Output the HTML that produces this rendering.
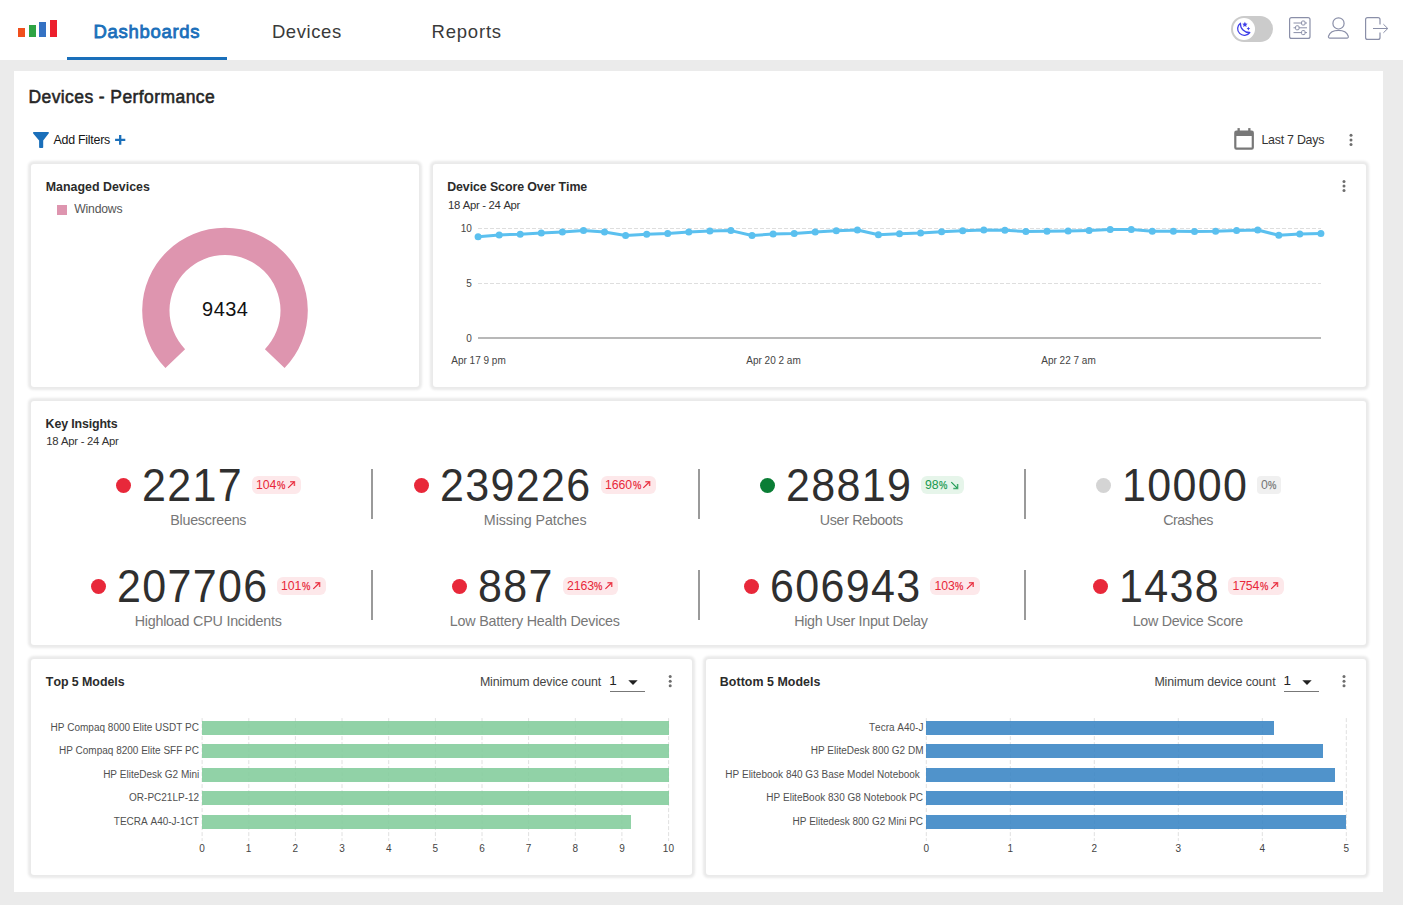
<!DOCTYPE html>
<html lang="en"><head><meta charset="utf-8"><title>Devices - Performance</title>
<style>
html,body{margin:0;padding:0}
body{width:1403px;height:905px;overflow:hidden;position:relative;background:#ebebeb;font-family:"Liberation Sans",sans-serif;color:#333}
.t{position:absolute;white-space:nowrap;line-height:1;font-kerning:none}
#hdr{position:absolute;left:0;top:0;width:1403px;height:60px;background:#fff}
#panel{position:absolute;left:14px;top:71px;width:1369px;height:821px;background:#fff}
.card{position:absolute;background:#fff;border-radius:3px;box-shadow:0 0 2.5px 2.5px rgba(0,0,0,.085)}
.lb{position:absolute;bottom:22.8px}
.bar{position:absolute;height:14px}
.bar.g{background:rgba(130,204,155,.88)} .bar.b{background:rgba(56,132,196,.88)}
.dot{position:absolute;width:15.3px;height:15.3px;border-radius:50%}
.badge{position:absolute;height:18px;border-radius:6px}
.vdiv{position:absolute;width:2px;height:49.6px;background:#9a9a9a}
#tab{position:absolute;left:67px;top:57px;width:160px;height:3px;background:#1a6fba}
#tog{position:absolute;left:1231px;top:16px;width:42px;height:26px;border-radius:13px;background:#cbcbcb}
#knob{position:absolute;left:1233px;top:18px;width:22px;height:22px;border-radius:50%;background:#fff}
.gfx{position:absolute;left:0;top:0}
.sel{position:absolute;height:1px;background:#777;top:691px;width:35px}
</style></head>
<body>
<div id="hdr">
  <div class="lb" style="left:18.1px;width:7px;height:9.6px;background:#f04f1c"></div>
  <div class="lb" style="left:28.95px;width:7px;height:12.2px;background:#2ea444"></div>
  <div class="lb" style="left:39.1px;width:6.9px;height:14.9px;background:#3572c3"></div>
  <div class="lb" style="left:49.8px;width:7px;height:17.5px;background:#ec1f2d"></div>
  <div id="tab"></div>
  <div id="tog"></div><div id="knob"></div>
</div>
<div id="panel"></div>
<div class="card" style="left:31px;top:164px;width:388px;height:223px"></div>
<div class="card" style="left:433px;top:164px;width:933px;height:223px"></div>
<div class="card" style="left:31px;top:401px;width:1335px;height:244px"></div>
<div class="card" style="left:31px;top:659px;width:661px;height:216px"></div>
<div class="card" style="left:706px;top:659px;width:660px;height:216px"></div>
<div style="position:absolute;left:56.8px;top:205px;width:10.4px;height:10px;background:#de95af"></div>
<div class="dot" style="left:115.8px;top:477.85px;background:#e8283a"></div>
<div class="dot" style="left:413.7px;top:477.85px;background:#e8283a"></div>
<div class="dot" style="left:759.7px;top:477.85px;background:#0a7d35"></div>
<div class="dot" style="left:1095.9px;top:477.85px;background:#d4d4d4"></div>
<div class="dot" style="left:90.8px;top:578.85px;background:#e8283a"></div>
<div class="dot" style="left:451.7px;top:578.85px;background:#e8283a"></div>
<div class="dot" style="left:743.9px;top:578.85px;background:#e8283a"></div>
<div class="dot" style="left:1092.7px;top:578.85px;background:#e8283a"></div>
<div class="badge" style="left:252.0px;top:476px;width:48.9px;background:#fde8ea"></div>
<div class="badge" style="left:601.0px;top:476px;width:55.1px;background:#fde8ea"></div>
<div class="badge" style="left:920.8px;top:476px;width:43.3px;background:#e6f5ea"></div>
<div class="badge" style="left:1256.9px;top:476px;width:24.1px;background:#f0f0f0;border-radius:4px"></div>
<div class="badge" style="left:277.0px;top:577px;width:49.1px;background:#fde8ea"></div>
<div class="badge" style="left:562.9px;top:577px;width:55.3px;background:#fde8ea"></div>
<div class="badge" style="left:930.4px;top:577px;width:49.3px;background:#fde8ea"></div>
<div class="badge" style="left:1228.3px;top:577px;width:55.7px;background:#fde8ea"></div>
<div class="vdiv" style="left:371.4px;top:469.3px"></div>
<div class="vdiv" style="left:371.4px;top:570.3px"></div>
<div class="vdiv" style="left:697.6px;top:469.3px"></div>
<div class="vdiv" style="left:697.6px;top:570.3px"></div>
<div class="vdiv" style="left:1024px;top:469.3px"></div>
<div class="vdiv" style="left:1024px;top:570.3px"></div>

<svg class="gfx" width="1403" height="905" viewBox="0 0 1403 905">
  <!-- bar chart grids -->
  <g stroke="#e0e0e0" stroke-width="1" stroke-dasharray="4 2" fill="none"><line x1="202.1" y1="718.1" x2="202.1" y2="841" /><line x1="248.8" y1="718.1" x2="248.8" y2="841" /><line x1="295.4" y1="718.1" x2="295.4" y2="841" /><line x1="342.0" y1="718.1" x2="342.0" y2="841" /><line x1="388.7" y1="718.1" x2="388.7" y2="841" /><line x1="435.4" y1="718.1" x2="435.4" y2="841" /><line x1="482.0" y1="718.1" x2="482.0" y2="841" /><line x1="528.6" y1="718.1" x2="528.6" y2="841" /><line x1="575.3" y1="718.1" x2="575.3" y2="841" /><line x1="621.9" y1="718.1" x2="621.9" y2="841" /><line x1="668.6" y1="718.1" x2="668.6" y2="841" /><line x1="926.3" y1="718.1" x2="926.3" y2="841" /><line x1="1010.3" y1="718.1" x2="1010.3" y2="841" /><line x1="1094.3" y1="718.1" x2="1094.3" y2="841" /><line x1="1178.3" y1="718.1" x2="1178.3" y2="841" /><line x1="1262.3" y1="718.1" x2="1262.3" y2="841" /><line x1="1346.3" y1="718.1" x2="1346.3" y2="841" /></g>
</svg>
<div class="bar g" style="left:202.1px;top:720.6px;width:466.5px"></div>
<div class="bar g" style="left:202.1px;top:744.2px;width:466.5px"></div>
<div class="bar g" style="left:202.1px;top:767.8px;width:466.5px"></div>
<div class="bar g" style="left:202.1px;top:791.0px;width:466.5px"></div>
<div class="bar g" style="left:202.1px;top:814.5px;width:429.2px"></div>
<div class="bar b" style="left:926.3px;top:720.6px;width:347.8px"></div>
<div class="bar b" style="left:926.3px;top:744.2px;width:396.9px"></div>
<div class="bar b" style="left:926.3px;top:767.8px;width:408.9px"></div>
<div class="bar b" style="left:926.3px;top:791.0px;width:416.6px"></div>
<div class="bar b" style="left:926.3px;top:814.5px;width:420.0px"></div>

<div class="sel" style="left:610px"></div><div class="sel" style="left:1284px"></div>
<svg class="gfx" width="1403" height="905" viewBox="0 0 1403 905">
  <!-- header icons -->
  <g fill="none" stroke="#8a8fa8" stroke-width="1.2">
    <rect x="1289.6" y="17.6" width="20.4" height="20.8" rx="2"/>
    <path d="M1293.5,23H1307 M1293.5,27.8H1307 M1293.5,32.6H1307" stroke-width="1"/>
    <rect x="1301.6" y="21" width="3.4" height="4" rx="1" fill="#fff" stroke-width="1"/>
    <rect x="1295.6" y="25.8" width="3.4" height="4" rx="1" fill="#fff" stroke-width="1"/>
    <rect x="1301.6" y="30.6" width="3.4" height="4" rx="1" fill="#fff" stroke-width="1"/>
    <circle cx="1338.5" cy="23.4" r="5.6"/>
    <path d="M1329.8,38.1 H1347 a1.4,1.4 0 0 0 1.3,-1.9 C1347,32.5 1343,30.4 1338.4,30.4 C1333.8,30.4 1329.8,32.5 1328.5,36.2 a1.4,1.4 0 0 0 1.3,1.9 Z" stroke-linejoin="round"/>
    <path d="M1380,24.5V19.6a2,2 0 0 0 -2,-2H1367.6a2,2 0 0 0 -2,2V37.4a2,2 0 0 0 2,2H1378a2,2 0 0 0 2,-2V32.5"/>
    <path d="M1373,28.5H1387.6 M1383.4,24.2L1387.8,28.5L1383.4,32.8" stroke-width="1"/>
  </g>
  <!-- moon -->
  <path d="M1240.4,23.2 A6.7,6.7 0 1 0 1249.8,32.5 A8.9,8.9 0 0 1 1240.4,23.2 Z" fill="none" stroke="#3f3fe8" stroke-width="1.3" stroke-linejoin="round"/>
  <g fill="#3f3fe8" stroke="none">
    <path d="M1244.9,21.8 l.8,1.7 1.9,.25 -1.4,1.3 .35,1.85 -1.65,-.9 -1.65,.9 .35,-1.85 -1.4,-1.3 1.9,-.25z"/>
    <path d="M1248.4,26.8 l.6,1.2 1.2,.6 -1.2,.6 -.6,1.2 -.6,-1.2 -1.2,-.6 1.2,-.6z"/>
  </g>
  <!-- filter funnel -->
  <path d="M33,132.6 a.8,.8 0 0 1 .7,-.6 H48.2 a.8,.8 0 0 1 .6,1.3 L43.2,140.6 V147.2 a.8,.8 0 0 1 -.8,.8 H39.9 a.8,.8 0 0 1 -.8,-.8 V140.6 L33.2,133.4 Z" fill="#1a6fba"/>
  <path d="M115.1,139.9H125.3 M120.2,135.1V144.7" stroke="#1a6fba" stroke-width="2.3" fill="none"/>
  <!-- calendar -->
  <g fill="#787878">
    <path d="M1236.4,130.5 h15.3 a2.2,2.2 0 0 1 2.2,2.2 v14.8 a2.2,2.2 0 0 1 -2.2,2.2 h-15.3 a2.2,2.2 0 0 1 -2.2,-2.2 v-14.8 a2.2,2.2 0 0 1 2.2,-2.2 Z M1236.4,136 v11.5 h15.3 v-11.5 Z" fill-rule="evenodd"/>
    <rect x="1237.5" y="128.1" width="2.3" height="3"/><rect x="1248.2" y="128.1" width="2.3" height="3"/>
  </g>
  <g fill="#6e6e6e"><circle cx="1351" cy="135.3" r="1.5"/><circle cx="1351" cy="139.9" r="1.5"/><circle cx="1351" cy="144.5" r="1.5"/><circle cx="1344" cy="181.4" r="1.5"/><circle cx="1344" cy="186" r="1.5"/><circle cx="1344" cy="190.6" r="1.5"/><circle cx="670.2" cy="676.6" r="1.5"/><circle cx="670.2" cy="681.2" r="1.5"/><circle cx="670.2" cy="685.8000000000001" r="1.5"/><circle cx="1344" cy="676.6" r="1.5"/><circle cx="1344" cy="681.2" r="1.5"/><circle cx="1344" cy="685.8000000000001" r="1.5"/></g>
  <path d="M628.3,680.3h9.4l-4.7,4.6z M1302.3,680.3h9.4l-4.7,4.6z" fill="#222"/>
  <!-- donut -->
  <path d="M165.44,368.12 A82.8,82.8 0 1 1 284.56,368.12 L264.92,349.15 A55.5,55.5 0 1 0 185.08,349.15 Z" fill="#de95af"/>
  <!-- line chart -->
  <g stroke="#dedede" stroke-width="1" stroke-dasharray="4 2">
    <line x1="478" y1="228.5" x2="1321" y2="228.5"/><line x1="478" y1="283.5" x2="1321" y2="283.5"/>
  </g>
  <line x1="478" y1="338" x2="1321" y2="338" stroke="#b8b8b8" stroke-width="2"/>
  <polyline points="478.1,236.8 499.2,234.9 520.2,234.2 541.3,233.0 562.4,231.9 583.5,230.6 604.5,232.1 625.6,235.5 646.7,234.2 667.7,233.4 688.8,232.1 709.9,231.0 730.9,230.6 752.0,235.5 773.1,234.0 794.2,233.4 815.2,231.9 836.3,230.8 857.4,230.0 878.4,234.7 899.5,233.8 920.6,233.0 941.6,231.7 962.7,230.8 983.8,230.0 1004.9,230.2 1025.9,231.5 1047.0,231.2 1068.1,231.0 1089.1,230.5 1110.2,229.6 1131.3,229.6 1152.3,231.2 1173.4,231.2 1194.5,231.4 1215.6,231.2 1236.6,230.5 1257.7,230.0 1278.8,235.3 1299.8,233.9 1320.9,233.5" fill="none" stroke="#5bc0ef" stroke-width="3" stroke-linejoin="round"/>
  <g fill="#5bc0ef"><circle cx="478.1" cy="236.8" r="3.5"/><circle cx="499.2" cy="234.9" r="3.5"/><circle cx="520.2" cy="234.2" r="3.5"/><circle cx="541.3" cy="233.0" r="3.5"/><circle cx="562.4" cy="231.9" r="3.5"/><circle cx="583.5" cy="230.6" r="3.5"/><circle cx="604.5" cy="232.1" r="3.5"/><circle cx="625.6" cy="235.5" r="3.5"/><circle cx="646.7" cy="234.2" r="3.5"/><circle cx="667.7" cy="233.4" r="3.5"/><circle cx="688.8" cy="232.1" r="3.5"/><circle cx="709.9" cy="231.0" r="3.5"/><circle cx="730.9" cy="230.6" r="3.5"/><circle cx="752.0" cy="235.5" r="3.5"/><circle cx="773.1" cy="234.0" r="3.5"/><circle cx="794.2" cy="233.4" r="3.5"/><circle cx="815.2" cy="231.9" r="3.5"/><circle cx="836.3" cy="230.8" r="3.5"/><circle cx="857.4" cy="230.0" r="3.5"/><circle cx="878.4" cy="234.7" r="3.5"/><circle cx="899.5" cy="233.8" r="3.5"/><circle cx="920.6" cy="233.0" r="3.5"/><circle cx="941.6" cy="231.7" r="3.5"/><circle cx="962.7" cy="230.8" r="3.5"/><circle cx="983.8" cy="230.0" r="3.5"/><circle cx="1004.9" cy="230.2" r="3.5"/><circle cx="1025.9" cy="231.5" r="3.5"/><circle cx="1047.0" cy="231.2" r="3.5"/><circle cx="1068.1" cy="231.0" r="3.5"/><circle cx="1089.1" cy="230.5" r="3.5"/><circle cx="1110.2" cy="229.6" r="3.5"/><circle cx="1131.3" cy="229.6" r="3.5"/><circle cx="1152.3" cy="231.2" r="3.5"/><circle cx="1173.4" cy="231.2" r="3.5"/><circle cx="1194.5" cy="231.4" r="3.5"/><circle cx="1215.6" cy="231.2" r="3.5"/><circle cx="1236.6" cy="230.5" r="3.5"/><circle cx="1257.7" cy="230.0" r="3.5"/><circle cx="1278.8" cy="235.3" r="3.5"/><circle cx="1299.8" cy="233.9" r="3.5"/><circle cx="1320.9" cy="233.5" r="3.5"/></g>
  <g stroke="#e8283a" fill="none"><path d="M288.1,487.8 L294.1,482.0" stroke-width="1.15"/><path d="M290.1,481.7 H294.4 V486.0" stroke-width="1.5" opacity=".8"/></g><g stroke="#e8283a" fill="none"><path d="M643.3,487.8 L649.3,482.0" stroke-width="1.15"/><path d="M645.3,481.7 H649.6 V486.0" stroke-width="1.5" opacity=".8"/></g><g stroke="#1a9a50" fill="none"><path d="M951.3,482.2 L957.3,488.1" stroke-width="1.15"/><path d="M953.3,488.4 H957.6 V484.1" stroke-width="1.5" opacity=".8"/></g><g stroke="#e8283a" fill="none"><path d="M313.3,588.8 L319.3,583.0" stroke-width="1.15"/><path d="M315.3,582.7 H319.6 V587.0" stroke-width="1.5" opacity=".8"/></g><g stroke="#e8283a" fill="none"><path d="M605.4,588.8 L611.4,583.0" stroke-width="1.15"/><path d="M607.4,582.7 H611.7 V587.0" stroke-width="1.5" opacity=".8"/></g><g stroke="#e8283a" fill="none"><path d="M966.9,588.8 L972.9,583.0" stroke-width="1.15"/><path d="M968.9,582.7 H973.2 V587.0" stroke-width="1.5" opacity=".8"/></g><g stroke="#e8283a" fill="none"><path d="M1271.2,588.8 L1277.2,583.0" stroke-width="1.15"/><path d="M1273.2,582.7 H1277.5 V587.0" stroke-width="1.5" opacity=".8"/></g>
</svg>
<span class="t" style="left:93.48px;top:22.60px;font-size:18.5px;color:#1a6fba;letter-spacing:0.704px;-webkit-text-stroke:.8px #1a6fba;">Dashboards</span>
<span class="t" style="left:271.88px;top:22.70px;font-size:18.5px;color:#3a3a3a;letter-spacing:0.581px;">Devices</span>
<span class="t" style="left:431.58px;top:22.70px;font-size:18.5px;color:#3a3a3a;letter-spacing:0.785px;">Reports</span>
<span class="t" style="left:28.46px;top:88.50px;font-size:17.5px;color:#262626;letter-spacing:0.412px;-webkit-text-stroke:.55px #262626;">Devices - Performance</span>
<span class="t" style="left:53.58px;top:134.10px;font-size:12.4px;color:#151515;letter-spacing:-0.259px;">Add Filters</span>
<span class="t" style="left:1261.38px;top:134.30px;font-size:12.4px;letter-spacing:-0.241px;">Last 7 Days</span>
<span class="t" style="left:45.77px;top:180.90px;font-size:12.4px;font-weight:700;color:#2b2b2b;letter-spacing:0.005px;">Managed Devices</span>
<span class="t" style="left:74.25px;top:202.80px;font-size:12.2px;color:#555;letter-spacing:-0.199px;">Windows</span>
<span class="t" style="left:202.06px;top:299.10px;font-size:20px;color:#111;letter-spacing:0.477px;">9434</span>
<span class="t" style="left:447.17px;top:180.90px;font-size:12.4px;font-weight:700;color:#2b2b2b;letter-spacing:-0.087px;">Device Score Over Time</span>
<span class="t" style="left:447.94px;top:200.00px;font-size:11.3px;letter-spacing:-0.299px;">18 Apr - 24 Apr</span>
<span class="t" style="left:460.67px;top:224.10px;font-size:10px;color:#444;">10</span>
<span class="t" style="left:466.16px;top:279.00px;font-size:10px;color:#444;">5</span>
<span class="t" style="left:466.13px;top:333.70px;font-size:10px;color:#444;">0</span>
<span class="t" style="left:451.28px;top:356.40px;font-size:10px;color:#444;">Apr 17 9 pm</span>
<span class="t" style="left:746.28px;top:356.40px;font-size:10px;color:#444;">Apr 20 2 am</span>
<span class="t" style="left:1041.28px;top:356.40px;font-size:10px;color:#444;">Apr 22 7 am</span>
<span class="t" style="left:45.57px;top:418.00px;font-size:12.4px;font-weight:700;color:#2b2b2b;letter-spacing:-0.135px;">Key Insights</span>
<span class="t" style="left:46.24px;top:435.90px;font-size:11.3px;letter-spacing:-0.284px;">18 Apr - 24 Apr</span>
<span class="t" style="left:141.97px;top:462.30px;font-size:46.5px;color:#2f2f2f;letter-spacing:1.458px;transform:scaleX(0.925);transform-origin:0 0;">2217</span>
<span class="t" style="left:170.23px;top:512.50px;font-size:14.3px;color:#777;letter-spacing:-0.240px;">Bluescreens</span>
<span class="t" style="left:439.87px;top:462.30px;font-size:46.5px;color:#2f2f2f;letter-spacing:1.458px;transform:scaleX(0.925);transform-origin:0 0;">239226</span>
<span class="t" style="left:483.83px;top:512.50px;font-size:14.3px;color:#777;letter-spacing:-0.095px;">Missing Patches</span>
<span class="t" style="left:785.87px;top:462.30px;font-size:46.5px;color:#2f2f2f;letter-spacing:1.458px;transform:scaleX(0.925);transform-origin:0 0;">28819</span>
<span class="t" style="left:819.80px;top:512.50px;font-size:14.3px;color:#777;letter-spacing:-0.364px;">User Reboots</span>
<span class="t" style="left:1122.07px;top:462.30px;font-size:46.5px;color:#2f2f2f;letter-spacing:1.458px;transform:scaleX(0.925);transform-origin:0 0;">10000</span>
<span class="t" style="left:1163.17px;top:512.50px;font-size:14.3px;color:#777;letter-spacing:-0.501px;">Crashes</span>
<span class="t" style="left:116.97px;top:563.30px;font-size:46.5px;color:#2f2f2f;letter-spacing:1.458px;transform:scaleX(0.925);transform-origin:0 0;">207706</span>
<span class="t" style="left:134.63px;top:613.50px;font-size:14.3px;color:#777;letter-spacing:-0.216px;">Highload CPU Incidents</span>
<span class="t" style="left:477.87px;top:563.30px;font-size:46.5px;color:#2f2f2f;letter-spacing:1.458px;transform:scaleX(0.925);transform-origin:0 0;">887</span>
<span class="t" style="left:449.83px;top:613.50px;font-size:14.3px;color:#777;letter-spacing:-0.218px;">Low Battery Health Devices</span>
<span class="t" style="left:770.07px;top:563.30px;font-size:46.5px;color:#2f2f2f;letter-spacing:1.458px;transform:scaleX(0.925);transform-origin:0 0;">606943</span>
<span class="t" style="left:794.23px;top:613.50px;font-size:14.3px;color:#777;letter-spacing:-0.314px;">High User Input Delay</span>
<span class="t" style="left:1118.87px;top:563.30px;font-size:46.5px;color:#2f2f2f;letter-spacing:1.458px;transform:scaleX(0.925);transform-origin:0 0;">1438</span>
<span class="t" style="left:1132.73px;top:613.50px;font-size:14.3px;color:#777;letter-spacing:-0.316px;">Low Device Score</span>
<span class="t" style="left:256.10px;top:478.90px;font-size:12.3px;color:#e8283a;letter-spacing:-0.101px;">104</span>
<span class="t" style="left:276.83px;top:478.90px;font-size:11.7px;color:#e8283a;-webkit-text-stroke:.25px #e8283a;transform:scaleX(0.8047);transform-origin:0 0;">%</span>
<span class="t" style="left:605.10px;top:478.90px;font-size:12.3px;color:#e8283a;letter-spacing:-0.101px;">1660</span>
<span class="t" style="left:632.57px;top:478.90px;font-size:11.7px;color:#e8283a;-webkit-text-stroke:.25px #e8283a;transform:scaleX(0.8047);transform-origin:0 0;">%</span>
<span class="t" style="left:924.90px;top:478.90px;font-size:12.3px;color:#1a9a50;letter-spacing:-0.101px;">98</span>
<span class="t" style="left:938.89px;top:478.90px;font-size:11.7px;color:#1a9a50;-webkit-text-stroke:.25px #1a9a50;transform:scaleX(0.8047);transform-origin:0 0;">%</span>
<span class="t" style="left:1261.00px;top:478.90px;font-size:12.3px;color:#777;letter-spacing:-0.101px;">0</span>
<span class="t" style="left:1268.25px;top:478.90px;font-size:11.7px;color:#777;-webkit-text-stroke:.25px #777;transform:scaleX(0.8047);transform-origin:0 0;">%</span>
<span class="t" style="left:281.10px;top:579.90px;font-size:12.3px;color:#e8283a;letter-spacing:-0.101px;">101</span>
<span class="t" style="left:301.83px;top:579.90px;font-size:11.7px;color:#e8283a;-webkit-text-stroke:.25px #e8283a;transform:scaleX(0.8047);transform-origin:0 0;">%</span>
<span class="t" style="left:567.00px;top:579.90px;font-size:12.3px;color:#e8283a;letter-spacing:-0.101px;">2163</span>
<span class="t" style="left:594.47px;top:579.90px;font-size:11.7px;color:#e8283a;-webkit-text-stroke:.25px #e8283a;transform:scaleX(0.8047);transform-origin:0 0;">%</span>
<span class="t" style="left:934.50px;top:579.90px;font-size:12.3px;color:#e8283a;letter-spacing:-0.101px;">103</span>
<span class="t" style="left:955.23px;top:579.90px;font-size:11.7px;color:#e8283a;-webkit-text-stroke:.25px #e8283a;transform:scaleX(0.8047);transform-origin:0 0;">%</span>
<span class="t" style="left:1232.40px;top:579.90px;font-size:12.3px;color:#e8283a;letter-spacing:-0.101px;">1754</span>
<span class="t" style="left:1259.87px;top:579.90px;font-size:11.7px;color:#e8283a;-webkit-text-stroke:.25px #e8283a;transform:scaleX(0.8047);transform-origin:0 0;">%</span>
<span class="t" style="left:45.86px;top:676.10px;font-size:12.4px;font-weight:700;color:#2b2b2b;letter-spacing:-0.043px;">Top 5 Models</span>
<span class="t" style="left:719.87px;top:676.10px;font-size:12.4px;font-weight:700;color:#2b2b2b;letter-spacing:0.053px;">Bottom 5 Models</span>
<span class="t" style="left:479.88px;top:676.00px;font-size:12.4px;color:#444;letter-spacing:-0.103px;">Minimum device count</span>
<span class="t" style="left:1154.38px;top:676.00px;font-size:12.4px;color:#444;letter-spacing:-0.108px;">Minimum device count</span>
<span class="t" style="left:609.36px;top:673.80px;font-size:13.5px;color:#222;">1</span>
<span class="t" style="left:1283.46px;top:673.80px;font-size:13.5px;color:#222;">1</span>
<span class="t" style="left:50.59px;top:722.70px;font-size:10px;color:#505050;">HP Compaq 8000 Elite USDT PC</span>
<span class="t" style="left:58.92px;top:746.30px;font-size:10px;color:#505050;">HP Compaq 8200 Elite SFF PC</span>
<span class="t" style="left:103.14px;top:769.90px;font-size:10px;color:#505050;">HP EliteDesk G2 Mini</span>
<span class="t" style="left:129.07px;top:793.10px;font-size:10px;color:#505050;">OR-PC21LP-12</span>
<span class="t" style="left:113.81px;top:816.60px;font-size:10px;color:#505050;">TECRA A40-J-1CT</span>
<span class="t" style="left:868.98px;top:722.70px;font-size:10px;color:#505050;">Tecra A40-J</span>
<span class="t" style="left:810.70px;top:746.30px;font-size:10px;color:#505050;">HP EliteDesk 800 G2 DM</span>
<span class="t" style="left:725.32px;top:769.90px;font-size:10px;color:#505050;">HP Elitebook 840 G3 Base Model Notebook</span>
<span class="t" style="left:766.33px;top:793.10px;font-size:10px;color:#505050;">HP EliteBook 830 G8 Notebook PC</span>
<span class="t" style="left:792.47px;top:816.60px;font-size:10px;color:#505050;">HP Elitedesk 800 G2 Mini PC</span>
<span class="t" style="left:199.32px;top:844.30px;font-size:10px;color:#444;">0</span>
<span class="t" style="left:245.83px;top:844.30px;font-size:10px;color:#444;">1</span>
<span class="t" style="left:292.62px;top:844.30px;font-size:10px;color:#444;">2</span>
<span class="t" style="left:339.30px;top:844.30px;font-size:10px;color:#444;">3</span>
<span class="t" style="left:385.95px;top:844.30px;font-size:10px;color:#444;">4</span>
<span class="t" style="left:432.58px;top:844.30px;font-size:10px;color:#444;">5</span>
<span class="t" style="left:479.19px;top:844.30px;font-size:10px;color:#444;">6</span>
<span class="t" style="left:525.86px;top:844.30px;font-size:10px;color:#444;">7</span>
<span class="t" style="left:572.52px;top:844.30px;font-size:10px;color:#444;">8</span>
<span class="t" style="left:619.17px;top:844.30px;font-size:10px;color:#444;">9</span>
<span class="t" style="left:662.85px;top:844.30px;font-size:10px;color:#444;">10</span>
<span class="t" style="left:923.52px;top:844.30px;font-size:10px;color:#444;">0</span>
<span class="t" style="left:1007.38px;top:844.30px;font-size:10px;color:#444;">1</span>
<span class="t" style="left:1091.52px;top:844.30px;font-size:10px;color:#444;">2</span>
<span class="t" style="left:1175.55px;top:844.30px;font-size:10px;color:#444;">3</span>
<span class="t" style="left:1259.55px;top:844.30px;font-size:10px;color:#444;">4</span>
<span class="t" style="left:1343.53px;top:844.30px;font-size:10px;color:#444;">5</span>
</body></html>
